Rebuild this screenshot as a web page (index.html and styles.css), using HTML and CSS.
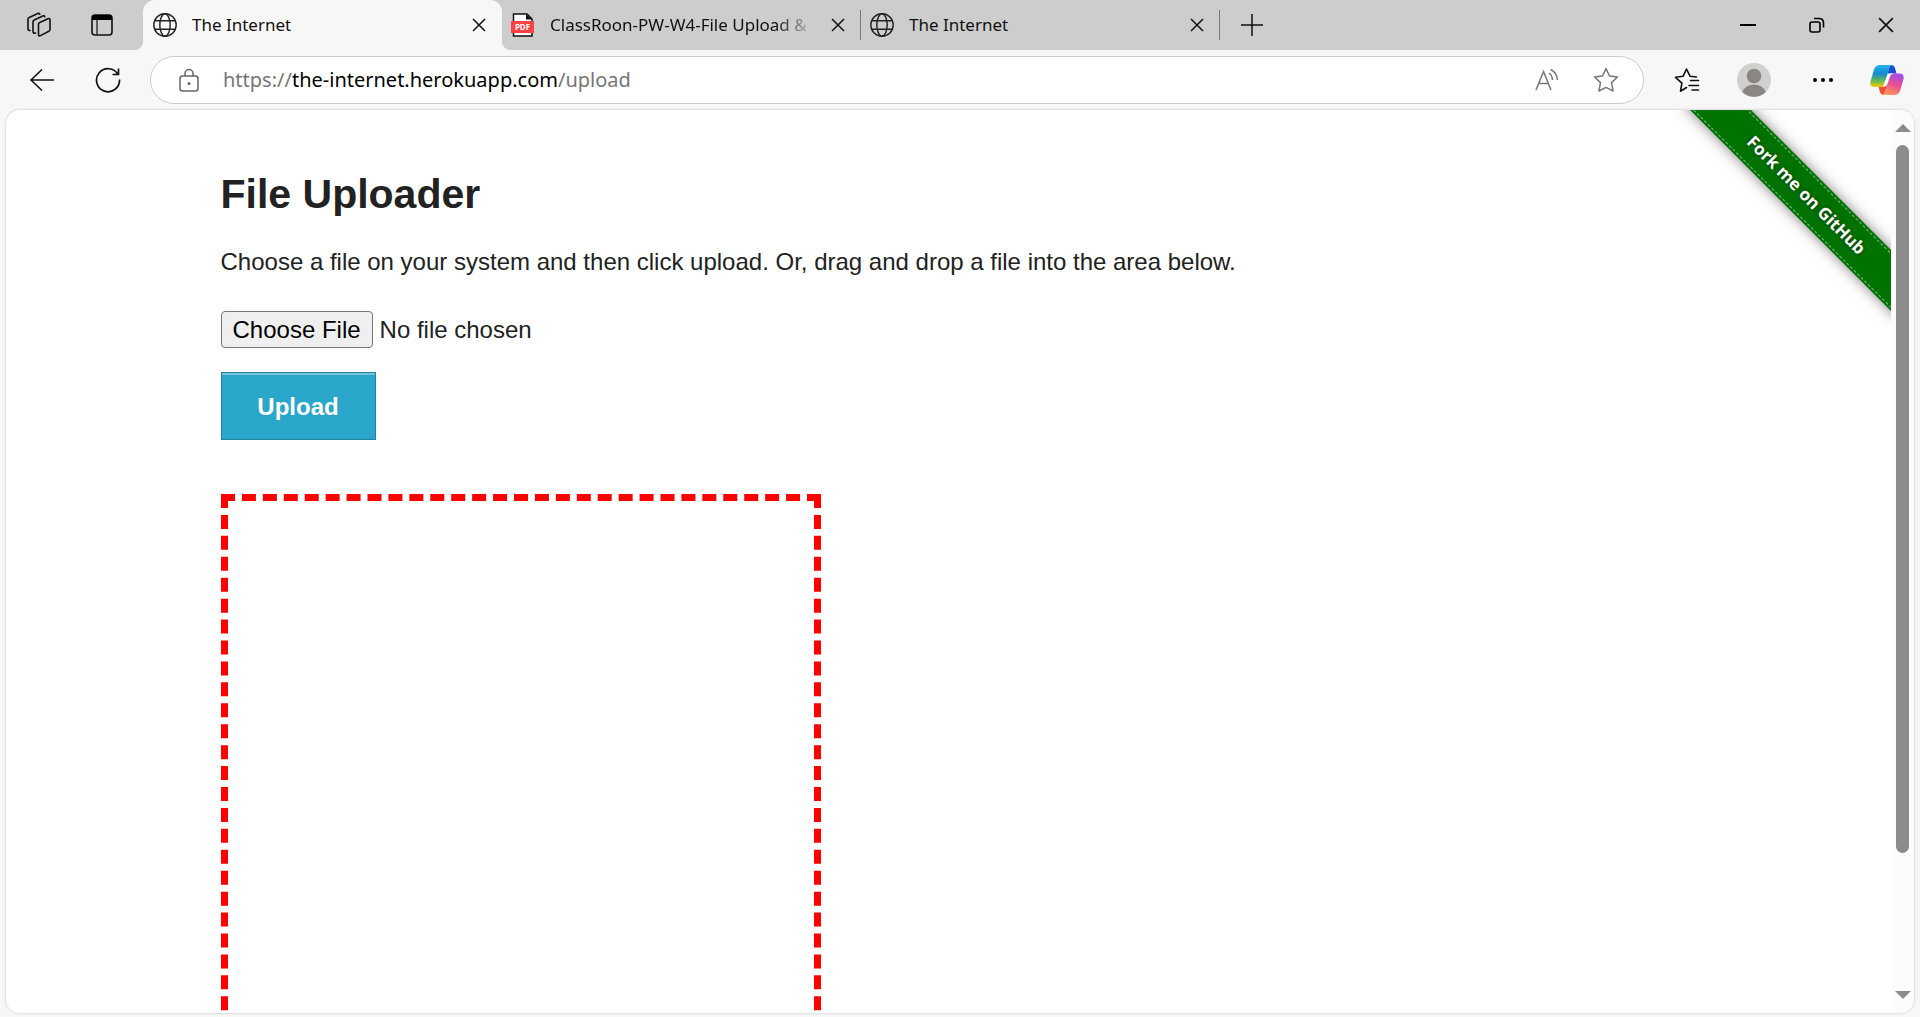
FILE: index.html
```html
<!DOCTYPE html>
<html lang="en">
<head>
<meta charset="utf-8">
<title>The Internet</title>
<link rel="stylesheet" href="styles.css">
</head>
<body>
<svg class="defs" width="0" height="0" aria-hidden="true">
  <symbol id="globe" viewBox="0 0 24 24"><g fill="none" stroke="#222" stroke-width="1.4"><circle cx="12" cy="12" r="11.2"/><ellipse cx="12" cy="12" rx="5.2" ry="11.2"/><path d="M2 7.7h20M2 16.3h20"/></g></symbol>
  <symbol id="close" viewBox="0 0 14 14"><path d="M1 1l12 12M13 1L1 13" fill="none" stroke="#111" stroke-width="1.5"/></symbol>
</svg>
<header class="tabbar">
  <div class="tab-tools">
    <button class="icon-btn" aria-label="Workspaces"><svg width="26" height="26" viewBox="0 0 26 26" fill="none" stroke="#111" stroke-width="1.6" stroke-linejoin="round" stroke-linecap="round"><path d="M12.5 12.2q0-1.3 1.2-1.8l8.3-3.7q2-.7 2 1.3v9.5q0 1.3-1.2 1.8l-8.3 4.3q-2 .8-2-1.2z"/><path d="M9.5 21q-2.500.7-2.500-1.500v-9.800q0-1.300 1.200-1.800l8.600-4q1.600-.5 2 .8"/><path d="M4 18.500q-2 .2-2-1.800V7.200q0-1.300 1.200-1.800l8.600-3.900q1.600-.5 2 .8"/></svg></button>
    <button class="icon-btn" aria-label="Tab actions"><svg width="22" height="22" viewBox="0 0 22 22"><rect x="1" y="1" width="20" height="20" rx="3" fill="none" stroke="#111" stroke-width="1.6"/><path d="M1 6V4a3 3 0 0 1 3-3h14a3 3 0 0 1 3 3v2z" fill="#000"/><path d="M6 6v15" stroke="#111" stroke-width="1.2"/></svg></button>
  </div>
  <nav class="tabs" aria-label="Tabs">
    <div class="tab tab-active">
      <svg class="favicon"><use href="#globe"/></svg>
      <span class="tab-title">The Internet</span>
      <button class="tab-close" aria-label="Close tab"><svg width="14" height="14"><use href="#close"/></svg></button>
    </div>
    <div class="tab">
      <svg class="favicon" viewBox="0 0 24 24"><path d="M2.500 1H16l5 5v17H2.500z" fill="#fff" stroke="#111" stroke-width="1.500"/><path d="M15 1v5.500h6z" fill="#111"/><path d="M0 8h23v12H0z" fill="#fb4346"/><text x="11.500" y="17" class="pdf-label">PDF</text></svg>
      <span class="tab-title tab-title-fade">ClassRoon-PW-W4-File Upload &amp;</span>
      <button class="tab-close" aria-label="Close tab"><svg width="14" height="14"><use href="#close"/></svg></button>
    </div>
    <div class="tab">
      <svg class="favicon"><use href="#globe"/></svg>
      <span class="tab-title">The Internet</span>
      <button class="tab-close" aria-label="Close tab"><svg width="14" height="14"><use href="#close"/></svg></button>
    </div>
    <button class="icon-btn new-tab" aria-label="New tab"><svg width="22" height="24" viewBox="0 0 22 24"><path d="M11 1v22M0 12h22" stroke="#111" stroke-width="1.5"/></svg></button>
  </nav>
  <div class="window-controls">
    <button class="icon-btn" aria-label="Minimize"><svg width="16" height="16" viewBox="0 0 16 16"><path d="M0 8h16" stroke="#000" stroke-width="2"/></svg></button>
    <button class="icon-btn" aria-label="Restore"><svg width="16" height="16" viewBox="0 0 16 16" fill="none" stroke="#000" stroke-width="1.6"><rect x="1" y="5" width="10" height="10" rx="2"/><path d="M5 1.500h5q4.500 0 4.500 4.500v4.500"/></svg></button>
    <button class="icon-btn" aria-label="Close"><svg width="16" height="16"><use href="#close"/></svg></button>
  </div>
</header>
<div class="toolbar">
  <button class="icon-btn" aria-label="Back"><svg width="26" height="24" viewBox="0 0 26 24" fill="none" stroke="#111" stroke-width="1.6"><path d="M25 12H2M13 1.500L2 12l11 10.500"/></svg></button>
  <button class="icon-btn reload" aria-label="Refresh"><svg width="26" height="26" viewBox="0 0 26 26" fill="none" stroke="#111" stroke-width="1.7"><path d="M24.500 12.500A11.500 11.500 0 1 1 23 7.500M23.500 1.500v6h-6"/></svg></button>
  <div class="address">
    <svg width="20" height="24" viewBox="0 0 20 24" fill="none" stroke="#666" stroke-width="1.5"><rect x="1" y="8" width="18" height="15" rx="2.5"/><path d="M6 8V5.500a4 4 0 0 1 8 0V8"/><circle cx="10" cy="15.500" r="1.500" fill="#666" stroke="none"/></svg>
    <a class="url" href="#"><span>https://</span><b>the-internet.herokuapp.com</b><span>/upload</span></a>
    <button class="icon-btn read" aria-label="Read aloud"><svg width="24" height="24" viewBox="0 0 24 24" fill="none" stroke="#777" stroke-width="1.5"><path d="M1 22L8.500 3.500 16 22M4 15.500h9M14 5q3 2 3.500 7M15.500 1.500q6 2.500 7 10.500"/></svg></button>
    <button class="icon-btn" aria-label="Add to favorites"><svg width="26" height="26" viewBox="0 0 26 26" fill="none" stroke="#777" stroke-width="1.5" stroke-linejoin="round"><path d="M13 1.500l3.500 7.500 8 1-6 5.600 1.600 8.400-7.100-3.700L5.900 24l1.600-8.400-6-5.600 8-1z"/></svg></button>
  </div>
  <div class="actions">
    <button class="icon-btn" aria-label="Favorites"><svg width="26" height="26" viewBox="0 0 26 26" fill="none" stroke="#111" stroke-width="1.6" stroke-linejoin="round" stroke-linecap="round"><path d="M12.500 20.500L6.500 24.200l1.400-8L1.500 10.300l7.500-1L12.500 2l3.500 7.200 6.500.8M16.500 13.500h8M15 18.500h9.500M18 23h6.500"/></svg></button>
    <button class="icon-btn" aria-label="Profile"><svg width="34" height="34" viewBox="0 0 34 34"><circle cx="17" cy="17" r="17" fill="#d2d0ce"/><circle cx="17" cy="13" r="7.300" fill="#8a8684"/><path d="M5.200 29q3.300-7.500 11.800-7.500T28.800 29A17 17 0 0 1 5.200 29z" fill="#8a8684"/></svg></button>
    <button class="icon-btn menu" aria-label="Settings and more"><svg width="20" height="4" viewBox="0 0 20 4"><circle cx="2" cy="2" r="2"/><circle cx="10" cy="2" r="2"/><circle cx="18" cy="2" r="2"/></svg></button>
    <button class="icon-btn" aria-label="Copilot"><svg width="34" height="32" viewBox="0 0 34 32">
      <defs>
        <linearGradient id="cool" x1="0" y1="0" x2="0" y2="1"><stop offset="0" stop-color="#23b5f2"/><stop offset=".4" stop-color="#1688cf"/><stop offset=".7" stop-color="#5cb95c"/><stop offset="1" stop-color="#fbc900"/></linearGradient>
        <linearGradient id="warm" x1=".7" y1="0" x2=".3" y2="1"><stop offset="0" stop-color="#a24bf0"/><stop offset=".5" stop-color="#e9508e"/><stop offset="1" stop-color="#ff9c5c"/></linearGradient>
      </defs>
      <path d="M19 1h2q3 0 4 3l1.500 5.500H21q-2.500 0-3.500 3z" fill="#1a4fd0"/>
      <path d="M8.500 22.500H14l3-3-2 11.500h-2q-2.200 0-3-3z" fill="#f04d3a"/>
      <path d="M10 1h12.500q-2.500.5-3.500 4l-4 14q-1 4-5 4H4.500q-5 0-4-5.500l3.500-12Q5.500 1 10 1z" fill="url(#cool)"/>
      <path d="M24 31H11.500q2.500-.5 3.500-4l4-14q1-3.500 5-3.500h5.500q5 0 4 5.500l-3.500 12Q28.500 31 24 31z" fill="url(#warm)"/>
      <path d="M21 9.500h-3l-5 13h2q2-.5 3-4l2-6q.5-2 3-3z" fill="#fff"/>
    </svg></button>
  </div>
</div>
<div class="viewport">
  <main class="page">
    <div class="row">
      <h1>File Uploader</h1>
      <p>Choose a file on your system and then click upload. Or, drag and drop a file into the area below.</p>
      <form>
        <input class="file" type="file" aria-label="Choose a file">
        <button class="upload" type="button">Upload</button>
      </form>
      <div class="dropzone"></div>
    </div>
    <a class="ribbon" href="#"><span>Fork me on GitHub</span></a>
  </main>
  <div class="scrollbar" aria-hidden="true">
    <svg width="16" height="8" viewBox="0 0 16 8"><path d="M8 0l8 8H0z" fill="#8b8b8b"/></svg>
    <div class="track"><div class="thumb"></div></div>
    <svg width="16" height="8" viewBox="0 0 16 8"><path d="M0 0h16L8 8z" fill="#8b8b8b"/></svg>
  </div>
</div>
</body>
</html>
```
FILE: styles.css
```css
* { box-sizing: border-box; }
body {
  margin: 0;
  height: 100vh;
  display: flex;
  flex-direction: column;
  overflow: hidden;
  background: #f7f7f7;
  font-family: "Noto Sans", sans-serif;
  color: #111;
}
svg { display: block; flex: none; }
.defs { position: absolute; }
.icon-btn, .tab-close {
  flex: none;
  display: flex;
  align-items: center;
  justify-content: center;
  padding: 0;
  border: 0;
  background: none;
}

/* Tab strip */
.tabbar {
  flex: none;
  display: flex;
  height: 50px;
  background: #cdcdcd;
}
.tab-tools {
  flex: none;
  display: flex;
  align-items: center;
  gap: 39px;
  width: 143px;
  padding-left: 26px;
}
.tabs { flex: 1; display: flex; min-width: 0; }
.tab {
  position: relative;
  display: flex;
  align-items: center;
  width: 359px;
  padding: 0 16px 0 9px;
}
.tab:not(.tab-active)::after {
  content: "";
  position: absolute;
  right: 0;
  top: 10px;
  width: 1px;
  height: 30px;
  background: #777;
}
.tab-active { padding-left: 10px; background: #f7f7f7; border-radius: 12px 12px 0 0; }
.tab-active::before, .tab-active::after {
  content: "";
  position: absolute;
  bottom: 0;
  width: 10px;
  height: 10px;
}
.tab-active::before { left: -10px; background: radial-gradient(circle at 0 0, #cdcdcd 10px, #f7f7f7 11px); }
.tab-active::after { right: -10px; background: radial-gradient(circle at 100% 0, #cdcdcd 10px, #f7f7f7 11px); }
.favicon { width: 24px; height: 24px; margin-right: 15px; }
.pdf-label { font: bold 8px "Noto Sans", sans-serif; fill: #fff; text-anchor: middle; }
.tab-title {
  flex: 1;
  overflow: hidden;
  white-space: nowrap;
  font-size: 17px;
  line-height: 24px;
}
.tab-title-fade {
  -webkit-mask-image: linear-gradient(to left, transparent, #000 40px);
  mask-image: linear-gradient(to left, transparent, #000 40px);
}
.tab-close { margin-left: 16px; }
.new-tab { width: 64px; }
.window-controls { display: flex; }
.window-controls .icon-btn { width: 69px; }

/* Address row */
.toolbar {
  flex: none;
  display: flex;
  align-items: center;
  height: 60px;
  padding-left: 29px;
}
.reload { margin: 0 29px 0 40px; }
.address {
  flex: 1;
  display: flex;
  align-items: center;
  height: 48px;
  padding: 0 24px 0 28px;
  border: 1px solid #ccc;
  border-radius: 24px;
  background: #fff;
}
.url {
  flex: 1;
  margin-left: 24px;
  color: #767676;
  font-size: 20px;
  line-height: 28px;
  text-decoration: none;
}
.url b { color: #000; font-weight: 400; }
.read { margin-right: 34px; }
.actions {
  flex: none;
  display: flex;
  align-items: center;
  justify-content: space-between;
  width: 230px;
  margin: 0 16px 0 30px;
}
.menu { margin-left: 6px; }

/* Page */
.viewport {
  flex: 1;
  display: flex;
  min-height: 0;
  margin: 0 6px 4px;
  border-radius: 14px;
  overflow: hidden;
  background: #fff;
  box-shadow: 0 0 2px 1px #ddd;
}
.page {
  position: relative;
  flex: 1;
  overflow: hidden;
  font-family: "Liberation Sans", sans-serif;
  color: #222;
}
.row { max-width: 1500px; margin: 0 auto; padding: 54px 22px 0; }
h1 { margin: 0 0 20px; font-size: 41px; line-height: 60px; }
p { margin: 0 0 31px; font-size: 24px; line-height: 36px; }
.file {
  display: block;
  height: 37px;
  margin-bottom: 24px;
  font-family: inherit;
  font-size: 24px;
  color: #222;
}
.file::file-selector-button {
  height: 37px;
  margin-right: 7px;
  padding: 0 11px;
  border: 1px solid #767676;
  border-radius: 4px;
  background: #efefef;
  color: #000;
  font-family: inherit;
  font-size: 24px;
}
.upload {
  display: block;
  width: 155px;
  height: 68px;
  margin-bottom: 54px;
  padding: 2px 0 0;
  border: 1px solid #2284a1;
  background: #2ba6cb;
  box-shadow: inset 0 2px 0 #72c4dd;
  color: #fff;
  font-family: inherit;
  font-size: 24px;
  font-weight: 700;
}
.dropzone { width: 600px; height: 600px; border: 7px dashed #f00; }
.ribbon {
  position: absolute;
  top: 64px;
  right: -65px;
  width: 300px;
  height: 43px;
  padding: 2px 0;
  background: #007200;
  box-shadow: 0 0 14px rgba(0, 0, 0, .5);
  color: #fff;
  text-align: center;
  text-decoration: none;
  transform: rotate(45deg);
}
.ribbon span {
  display: block;
  height: 39px;
  border: dashed #7fb97f;
  border-width: 1px 0;
  font: bold 17px/36px "Noto Sans", sans-serif;
  text-shadow: 0 0 4px #003000;
}
.scrollbar {
  flex: none;
  display: flex;
  flex-direction: column;
  align-items: center;
  width: 23px;
  padding: 14px 0;
  background: #fcfcfc;
}
.track { flex: 1; width: 13px; padding: 13px 0; }
.thumb { height: 85%; border-radius: 7px; background: #8b8b8b; }
```
